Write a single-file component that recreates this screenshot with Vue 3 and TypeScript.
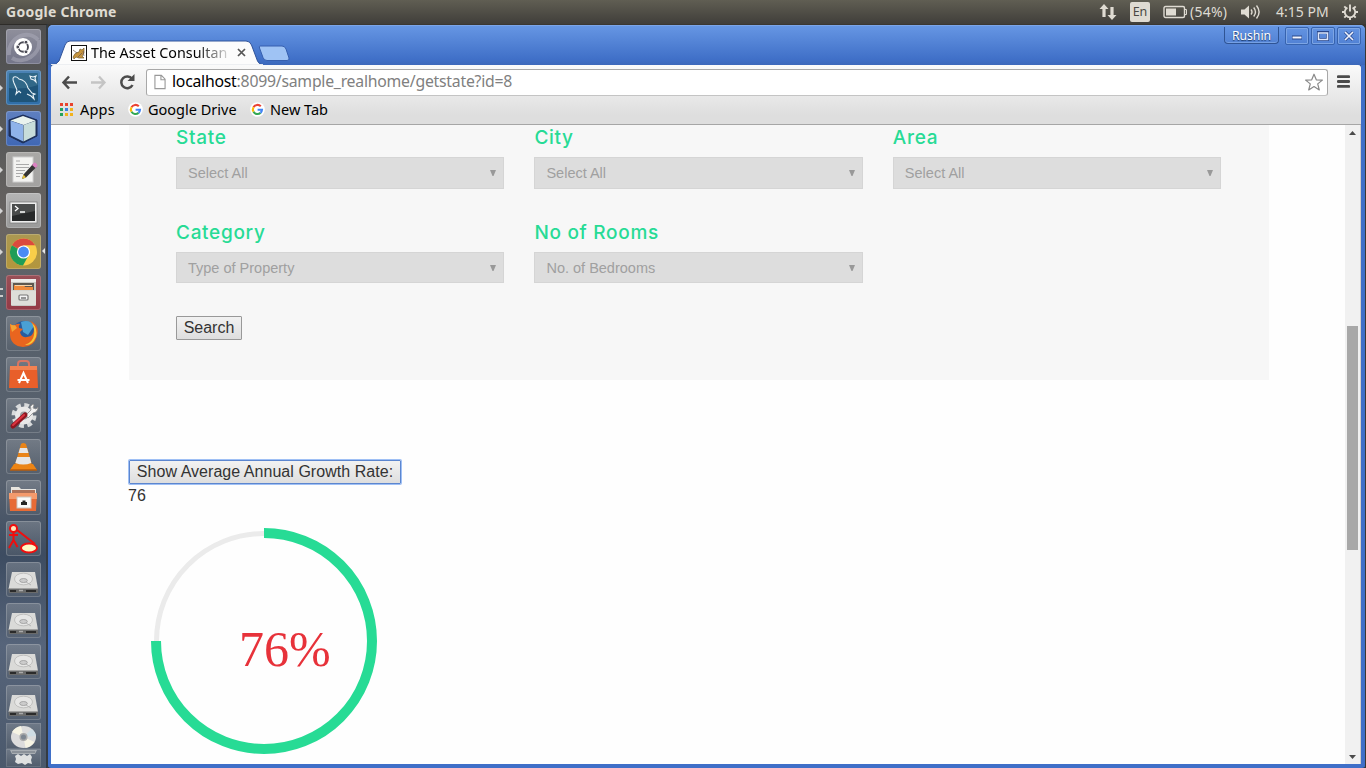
<script setup lang="ts">
interface Launcher { kind: string; bg: string; mark?: string; focused?: boolean }
interface Field { label: string; value: string }

const glass = 'linear-gradient(#8b929b88, #555f6c88)'
const launchers: Launcher[] = [
  { kind: 'dash', bg: 'linear-gradient(#8f8f9b, #73758a)' },
  { kind: 'mysql', bg: 'linear-gradient(#4c83b4, #2f6ea8)', mark: 'arrow' },
  { kind: 'cube', bg: 'linear-gradient(#5f80c0, #3f67b4)', mark: 'arrow' },
  { kind: 'editor', bg: 'linear-gradient(#a9a8a6, #a3a2a1)', mark: 'arrow' },
  { kind: 'terminal', bg: 'linear-gradient(#b5b5b5, #9a9a9a)', mark: 'arrow' },
  { kind: 'chrome', bg: 'linear-gradient(#ab9852, #b3963c)', mark: 'arrow', focused: true },
  { kind: 'files', bg: 'linear-gradient(#995057, #943a46)', mark: 'double' },
  { kind: 'firefox', bg: glass },
  { kind: 'software', bg: glass },
  { kind: 'settings', bg: glass },
  { kind: 'vlc', bg: glass },
  { kind: 'network', bg: glass },
  { kind: 'stick', bg: glass },
  { kind: 'disk', bg: glass },
  { kind: 'disk', bg: glass },
  { kind: 'disk', bg: glass },
  { kind: 'disk', bg: glass },
]
const fields: Field[] = [
  { label: 'State', value: 'Select All' },
  { label: 'City', value: 'Select All' },
  { label: 'Area', value: 'Select All' },
  { label: 'Category', value: 'Type of Property' },
  { label: 'No of Rooms', value: 'No. of Bedrooms' },
]
const appDots = ['#e8432e', '#e8432e', '#e8432e', '#24a25a', '#3b82e0', '#f2b21b', '#24a25a', '#f2b21b', '#f2b21b']
const bookmarks = ['Google Drive', 'New Tab']
</script>

<template>
  <div class="desktop">
    <header class="menubar">
      <span class="app-name">Google Chrome</span>
      <div class="tray">
        <svg class="t-net" width="18" height="18" viewBox="0 0 18 18" fill="#dfdbd2"><path d="M5 1 9.500 6H6.600v8H3.400V6H.5zM13 17l4.500-5h-2.900V4h-3.200v8H8.500z" /></svg>
        <span class="lang">En</span>
        <svg class="t-bat" width="25" height="14" viewBox="0 0 25 14"><rect x="1" y="1.500" width="20.500" height="11" rx="1.500" fill="none" stroke="#dfdbd2" stroke-width="1.400" /><rect x="3" y="3.500" width="10" height="7" fill="#dfdbd2" /><path d="M22 4.500h1.500v5H22" fill="none" stroke="#dfdbd2" /></svg>
        <span class="pct">(54%)</span>
        <svg class="t-vol" width="20" height="16" viewBox="0 0 20 16"><path d="M0 5.500h3.500L8 1.500v13l-4.500-4H0z" fill="#dfdbd2" /><path d="M10 5.500q2 2.500 0 5M12.700 3.500q3.600 4.500 0 9M15.500 1.500q5.200 6.500 0 13" fill="none" stroke="#dfdbd2" stroke-width="1.400" /></svg>
        <span class="clock">4:15 PM</span>
        <svg class="t-gear" width="16" height="16" viewBox="0 0 16 16" fill="none" stroke="#dfdbd2"><path d="M5.400 3.600a5.200 5.200 0 1 0 5.200 0" stroke-width="1.800" /><path d="M8 .5v7M0 8h3M13 8h3M8 13v3M2.300 2.300l2 2M13.700 2.300l-2 2M2.300 13.700l2-2M13.700 13.700l-2-2" stroke-width="1.900" /></svg>
      </div>
    </header>

    <div class="workspace">
      <nav class="launcher">
        <div v-for="(l, i) in launchers" :key="i" class="slot">
          <i class="mark" :class="l.mark" />
          <div class="tile" :style="{ background: l.bg }">
            <svg width="35" height="35" viewBox="0 0 35 35">
              <g v-if="l.kind === 'dash'">
                <path d="M3 26C1 9 22-1 32 11M33 11c2 15-16 25-27 18" fill="none" stroke="#aaaab8" stroke-width="4" opacity=".55" />
                <circle cx="17" cy="18" r="9" fill="#fff" />
                <circle cx="17.200" cy="18" r="4.800" fill="none" stroke="#4b4b55" stroke-width="1.900" />
                <g fill="#4b4b55" stroke="#fff" stroke-width=".9"><circle cx="11.800" cy="18" r="1.900" /><circle cx="20" cy="13.200" r="1.900" /><circle cx="20" cy="22.800" r="1.900" /></g>
              </g>
              <g v-else-if="l.kind === 'mysql'">
                <rect x="3" y="3" width="29" height="29" rx="2" fill="#1f5478" />
                <path d="M3 3h29v12Q18 20 3 18z" fill="#39708f" opacity=".7" />
                <path d="M11 20 8 13Q6 8 8 7q3-1 5 2 7 1 9 9l4 5 3 1-2 1 1 4-3-3-4-2M11 20l-1 4 3-3 2 2M24 6l1 3 3 1 2 2-1-4 1-2-3 1z" fill="none" stroke="#e8f2f7" stroke-width="1.100" />
              </g>
              <g v-else-if="l.kind === 'cube'">
                <path d="M17 4 31 9v16l-14 7L3 25V9z" fill="#1c2f59" stroke="#1c2f59" stroke-linejoin="round" />
                <path d="M17 5 29.500 9.500 17.500 14 4.500 9.500z" fill="#e9f3ee" />
                <path d="M4.500 9.800 17.200 14v16.500L5 24.500z" fill="#8fb3ea" />
                <path d="M17.500 14 29.500 9.800v14.700l-12 6z" fill="#c7ddda" />
              </g>
              <g v-else-if="l.kind === 'editor'">
                <rect x="7" y="5" width="20" height="25" fill="#f3f3f1" stroke="#cfcfcf" />
                <path d="M10 9h4M10 12.500h13M10 15.500h13M10 18.500h9M10 21.500h7M10 24.500h4" stroke="#aaa" stroke-width="1" />
                <path d="m16 27 1.500-4.500L27 12l3.500 3L20 25.500z" fill="#333" />
                <path d="m26 13 2-2.500q3 0 3.500 3.500l-2 2z" fill="#d982c0" /><path d="m16 27 1.500-4.500L20 25.500z" fill="#e5c13c" />
              </g>
              <g v-else-if="l.kind === 'terminal'">
                <rect x="4" y="9" width="27" height="21" fill="#ececec" stroke="#777" stroke-width=".7" />
                <rect x="6" y="11" width="23" height="17" fill="#27292a" /><path d="M6 11h23v7L6 23z" fill="#4a4c4c" />
                <path d="m9 13 3 2.500L9 18M14 19h5" fill="none" stroke="#fff" stroke-width="1.300" />
              </g>
              <g v-else-if="l.kind === 'chrome'">
                <circle cx="17.500" cy="18" r="13.500" fill="#f9ce49" />
                <path d="M17.500 18 5.800 11.200A13.500 13.500 0 0 1 29.200 11.200H17.500z" fill="#db4a3e" />
                <path d="M17.500 18 5.800 11.200A13.500 13.500 0 0 0 17 31.500l5.500-10z" fill="#1f9d57" />
                <circle cx="17.500" cy="18" r="6.600" fill="#fff" /><circle cx="17.500" cy="18" r="5.400" fill="#4a8af4" />
              </g>
              <g v-else-if="l.kind === 'files'">
                <rect x="5" y="4" width="25" height="27" rx="1" fill="#c8c8c3" />
                <path d="M5 4h25v3H5z" fill="#ededea" /><path d="M7 8h21v7H7z" fill="#5e5850" /><path d="M8 10h10l1 2h8v3H8z" fill="#ef8b3d" /><path d="M9 10.500h17" stroke="#f9d3a8" />
                <path d="M5 15.500h25V30H5z" fill="#deded9" /><rect x="13" y="20" width="9" height="5" rx="1" fill="#f4f4f4" stroke="#777" stroke-width="1.200" /><path d="M15 23h5" stroke="#777" stroke-width="1.500" />
              </g>
              <g v-else-if="l.kind === 'firefox'">
                <circle cx="18" cy="17.500" r="12.500" fill="#285c9d" /><path d="M15 6q9-3 13 4l-6 9-5-3z" fill="#4aa0d4" />
                <path d="M4 8q3 2 5 1 3-2 5-1-2 2-1 4l4 1-3 3q1 6 7 5 7-1 7-8 0-5-4-8 10 4 7 15-3 11-14 11Q5 30 4 19z" fill="#e9651f" />
                <path d="M26 7q6 5 4 14-4 9-11 8 8-3 9-10 1-6-2-12z" fill="#f7c739" /><path d="M4 8q3 2 5 1l2 3-5 4z" fill="#f4a434" />
              </g>
              <g v-else-if="l.kind === 'software'">
                <path d="M12 11V7q0-3 3-3h5q3 0 3 3v4" fill="none" stroke="#d97562" stroke-width="2" />
                <path d="M4 9h27l1 22H3z" fill="#e85f2a" /><path d="M4 9h27v4H4z" fill="#f28252" />
                <path d="m13 26 4.500-10L22 26M11.500 23h12" fill="none" stroke="#fff" stroke-width="2" />
              </g>
              <g v-else-if="l.kind === 'settings'">
                <circle cx="18" cy="17.500" r="10" fill="none" stroke="#d8dadb" stroke-width="5" stroke-dasharray="4.500 3.350" /><circle cx="18" cy="17.500" r="9" fill="#e8e8e8" /><circle cx="18" cy="17.500" r="4" fill="#9da0a3" />
                <path d="m20 17 5-5q-2-4 2-6l1 1-1 3 3 1 2-2q0 5-5 6l-5 5z" fill="#f2f2f2" stroke="#888" stroke-width=".8" /><path d="M7 28 19 17" stroke="#8e1620" stroke-width="5" stroke-linecap="round" /><path d="M7 27 18 17" stroke="#dc3440" stroke-width="2" stroke-linecap="round" />
              </g>
              <g v-else-if="l.kind === 'vlc'">
                <path d="M8 25h19l4 6H4z" fill="#ee8514" /><path d="M15 5q2-2 5 0l6 21q-8 5-17 0z" fill="#e98418" /><path d="M14 9h7l1.500 5h-10zM11.300 18h12.500l1.500 6q-8 3-16 0z" fill="#e6e6e6" /><path d="M4 31h27" stroke="#b85d0b" stroke-width="1.500" />
              </g>
              <g v-else-if="l.kind === 'network'">
                <path d="M5 7h8l2 2h15v5H5z" fill="#e8e5df" /><path d="M6 10h23v3H6z" fill="#ad7159" /><path d="M3 13h28l-1 18H4z" fill="#e76b36" /><path d="M3 13h28v6H3z" fill="#f49a6c" />
                <rect x="11" y="17" width="14" height="11" fill="#fafafa" stroke="#c9c5be" /><path d="M15 25v-3h1.500v-1.500h3V22H21v3z" fill="#252525" />
              </g>
              <g v-else-if="l.kind === 'stick'" fill="none" stroke="#f00d0d" stroke-width="2">
                <circle cx="7.500" cy="7.500" r="3.500" fill="#ffe6bb" /><path d="M7.500 11v9M3 14h9M7.500 19 3 27M7.500 19l4 7M11 9l18 14" /><ellipse cx="23" cy="27" rx="8" ry="4.500" fill="#fffac4" />
              </g>
              <g v-else>
                <path d="M6 10h23l3 17H2.500z" fill="#dadad8" /><path d="M2.500 26.500H32V31H3z" fill="#6a6b6b" /><path d="M4 29h6M20 29h10" stroke="#2b2b2b" stroke-width="1.800" /><path d="M13 28.500h4" stroke="#aaa" stroke-width="1.500" />
                <ellipse cx="17.500" cy="17" rx="9" ry="5.800" fill="#e6e6e5" stroke="#b8b8b6" stroke-width=".8" /><ellipse cx="17.500" cy="18.500" rx="3.800" ry="2" fill="#ccc" stroke="#999" stroke-width=".8" /><path d="m20 20 5 3" stroke="#b5b5b5" />
              </g>
            </svg>
          </div>
          <i v-if="l.focused" class="focus-mark" />
        </div>
        <div class="folded cd">
          <svg width="35" height="26" viewBox="0 0 35 26"><ellipse cx="17.500" cy="14" rx="12.500" ry="11" fill="#dcdcdc" /><path d="M17.500 14 6 9q3-5 9-6zM17.500 14l11 5q-3 5-9 6z" fill="#f6f4e4" /><path d="m17.500 14 8-8q4 3 4.500 7z" fill="#cfdde4" /><circle cx="17.500" cy="14" r="3.300" fill="#7e8791" stroke="#aaa" stroke-width="1.500" /></svg>
        </div>
        <div class="folded trash">
          <svg width="35" height="18" viewBox="0 0 35 18"><path d="M4 1h27l-2 4H6z" fill="#a9aeb3" /><path d="M6 3h23" stroke="#6c757e" /><path d="m9 7 3-2 3 2 3-2 3 2 3-2 2 3-1 3 1 4-4-1-3 2-3-2-4 1-3-2 1-3z" fill="#dfe1e1" /></svg>
        </div>
      </nav>

      <main class="window">
        <div class="titlebar">
          <div class="tab">
            <svg class="tab-shape" width="214" height="25" viewBox="0 0 214 25"><path d="M0 25q6-.5 8-4l6-16q1.500-4 5-4h176q4 0 5.500 4l6 16q1.500 3.500 5.500 4z" fill="#fcfcfc" stroke="#31549a" stroke-width="1" /><path d="M0 24.600h212" stroke="#f7f7f7" /></svg>
            <div class="tab-content">
              <svg class="cat" width="16" height="16" viewBox="0 0 16 16"><rect x=".5" y=".5" width="15" height="15" fill="#fff" stroke="#111" /><path d="M2 12q2-5 6-5l1-3 2 1 2-2v5l-2 3 2 2H8l-3-1-2 2z" fill="#c7953f" stroke="#756030" stroke-width=".7" /><path d="m2 5 4 3M7 12l4-4M12 6l1 5" stroke="#655" stroke-width=".7" /></svg>
              <span class="tab-title">The Asset Consultan</span>
              <svg class="tab-x" width="9" height="9" viewBox="0 0 9 9"><path d="m1 1 7 7M8 1 1 8" stroke="#555" stroke-width="1.700" /></svg>
            </div>
          </div>
          <svg class="new-tab" width="33" height="17" viewBox="0 0 33 17"><path d="M2 1h22q3 0 4 3l3 9q.5 2.500-2 2.500H9q-3 0-4-3L1.500 3Q1 1 2 1z" fill="#9fc3f4" stroke="#365fae" /></svg>
          <div class="controls">
            <span class="user">Rushin</span>
            <span class="wbtn"><svg width="12" height="10" viewBox="0 0 12 10"><path d="M1 6.500h10" stroke="#29468a" stroke-width="4" /><path d="M1.500 6.500h9" stroke="#f3f6ff" stroke-width="2" /></svg></span>
            <span class="wbtn"><svg width="12" height="10" viewBox="0 0 12 10"><rect x="1.500" y="1.500" width="9" height="7" fill="none" stroke="#29468a" stroke-width="3" /><path d="M1.500 2h9v6.500h-9z" fill="none" stroke="#dce7fb" stroke-width="1.600" /></svg></span>
            <span class="wbtn"><svg width="12" height="10" viewBox="0 0 12 10"><path d="m2 1 8 8M10 1 2 9" stroke="#29468a" stroke-width="3" /><path d="m2 1 8 8M10 1 2 9" stroke="#eef3ff" stroke-width="1.700" /></svg></span>
          </div>
        </div>

        <div class="chrome">
          <div class="toolbar">
            <svg width="17" height="15" viewBox="0 0 17 15" class="nav-ico"><path d="M8 1.500 2.500 7.500l5.500 6M2.500 7.500H16" fill="none" stroke="#4c4c4c" stroke-width="2.500" /></svg>
            <svg width="17" height="15" viewBox="0 0 17 15" class="nav-ico fwd"><path d="m9 1.500 5.500 6-5.500 6M14.500 7.500H1" fill="none" stroke="#c4c4c4" stroke-width="2.300" /></svg>
            <svg width="17" height="16" viewBox="0 0 17 16" class="nav-ico rel"><path d="M13 4.800A5.900 5.900 0 1 0 13.500 11" fill="none" stroke="#4c4c4c" stroke-width="2.500" /><path d="M15.500 0v7h-7z" fill="#4c4c4c" /></svg>
            <div class="omnibox">
              <svg width="12" height="16" viewBox="0 0 13 16"><path d="M1 .8h7L12 5v10.200H1zM7.500 1v4.500H12" fill="#fff" stroke="#999" stroke-width="1.200" /></svg>
              <span class="url"><b>localhost</b>:8099/sample_realhome/getstate?id=8</span>
              <svg class="star" width="20" height="18" viewBox="0 0 20 18"><path d="m10 1.200 2.300 5.600 6.100.3-4.700 3.800 1.600 6L10 13.500l-5.300 3.400 1.600-6L1.600 7.100l6.100-.3z" fill="#fff" stroke="#888" stroke-width="1.200" stroke-linejoin="round" /></svg>
            </div>
            <svg class="menu" width="13" height="13" viewBox="0 0 13 13"><path d="M1.200 1.700h10.600M1.200 6.500h10.600M1.200 11.300h10.600" stroke="#4b4b4b" stroke-width="2.800" stroke-linecap="round" /></svg>
          </div>
          <div class="bookmarks">
            <div class="dots"><i v-for="(c, i) in appDots" :key="i" :style="{ background: c }" /></div>
            <span class="apps">Apps</span>
            <div v-for="b in bookmarks" :key="b" class="bookmark">
              <svg width="15" height="15" viewBox="0 0 15 15"><circle cx="7.500" cy="7.500" r="7.300" fill="#fff" /><g fill="none" stroke-width="2.100"><path d="M10.800 4.300A4.600 4.600 0 0 0 3.500 5.300" stroke="#ea4335" /><path d="M3.500 5.300a4.600 4.600 0 0 0 0 4.500" stroke="#fbbc05" /><path d="M3.500 9.800a4.600 4.600 0 0 0 7 1.100" stroke="#34a853" /><path d="M10.500 10.900a4.600 4.600 0 0 0 1.500-3.100H7.600" stroke="#4285f4" /></g></svg>
              <span>{{ b }}</span>
            </div>
          </div>
        </div>

        <div class="viewport">
          <section class="page">
            <form class="panel" @submit.prevent>
              <div class="fields">
                <div v-for="f in fields" :key="f.label" class="field">
                  <h3>{{ f.label }}</h3>
                  <div class="select"><span>{{ f.value }}</span><svg width="6" height="6" viewBox="0 0 6 6"><path d="M0 0h6L3.500 6h-1z" fill="#999" /></svg></div>
                </div>
              </div>
              <button class="btn search">Search</button>
            </form>
            <button class="btn growth">Show Average Annual Growth Rate:</button>
            <div class="value">76</div>
            <svg class="ring" width="270" height="252" viewBox="0 0 270 252">
              <circle cx="135" cy="134" r="107.500" fill="none" stroke="#ebebeb" stroke-width="5" />
              <path d="M135 26a108 108 0 1 1-108 108" fill="none" stroke="#27db95" stroke-width="10" />
              <text x="110" y="159" font-size="50" fill="#e7323a">76%</text>
            </svg>
          </section>
          <div class="scrollbar">
            <svg width="7" height="4" viewBox="0 0 7 4"><path d="M3.500 0 7 4H0z" fill="#4b4b4b" /></svg>
            <i class="thumb" />
            <svg width="7" height="4" viewBox="0 0 7 4"><path d="M0 0h7L3.500 4z" fill="#4b4b4b" /></svg>
          </div>
        </div>
      </main>
    </div>
  </div>
</template>

<style>
html, body { margin: 0; overflow: hidden; }
</style>
<style scoped>
* { box-sizing: border-box; }
svg { display: block; flex: none; }
.desktop { width: 1366px; height: 768px; display: flex; flex-direction: column; overflow: hidden; font-family: "Noto Sans", "Open Sans", sans-serif; background: #3a3732; }
.menubar { height: 24px; flex: none; display: flex; justify-content: space-between; align-items: center; padding-left: 6px; background: linear-gradient(#605e53, #403e3a); color: #dfdbd2; }
.app-name { font-size: 14px; font-weight: 700; line-height: 24px; letter-spacing: .25px; white-space: nowrap; }
.tray { display: flex; align-items: center; height: 24px; padding-right: 8px; font-size: 14px; white-space: nowrap; }
.lang { width: 20px; height: 20px; margin: 0 13px 0 13px; border-radius: 2px; background: #dfdbd2; color: #4a4843; font-size: 12.5px; line-height: 20px; text-align: center; }
.pct { width: 39px; margin-left: 2px; letter-spacing: .25px; line-height: 22px; padding-bottom: 1px; }
.t-vol { margin-left: 12px; }
.clock { width: 54px; margin-left: 15px; letter-spacing: 0; line-height: 22px; padding-bottom: 1px; }
.t-gear { margin-left: 12px; }

.workspace { flex: 1; min-height: 0; display: flex; }
.launcher { width: 48px; flex: none; padding-top: 4px; display: flex; flex-direction: column; overflow: hidden; background: linear-gradient(#4f4f50 0, #5a5b5b 120px, #6a6562 205px, #58616b 270px, #56606e 460px, #3d4c61 530px, #56647a 620px, #4b596c 744px); border-right: 2px solid #343b42; border-top: 1px solid #2e2c29; }
.slot { height: 41px; flex: none; display: flex; align-items: flex-start; }
.mark { width: 6px; height: 35px; display: flex; align-items: center; }
.mark.arrow::before { content: ''; border-left: 3px solid #d5d5d5; border-top: 3px solid transparent; border-bottom: 3px solid transparent; }
.mark.double::before { content: ''; width: 3px; height: 5px; border-top: 2px solid #ccc; border-bottom: 2px solid #ccc; }
.tile { width: 35px; height: 35px; border-radius: 3px; box-shadow: inset 0 0 0 1px #ffffff30; }
.focus-mark { margin: 14px 0 0 1px; border-right: 3px solid #e5e5e5; border-top: 3px solid transparent; border-bottom: 3px solid transparent; }
.folded { width: 35px; margin-left: 6px; flex: none; background: linear-gradient(#8b929b88, #555f6c88); box-shadow: inset 0 0 0 1px #ffffff20; }
.cd { height: 26px; margin-top: -3px; }
.trash { height: 18px; }

.window { flex: 1; min-width: 0; margin: 1px 1px 0 0; border: 3px solid #3f6fc8; border-top: 0; border-right-width: 4px; border-bottom-width: 4px; border-radius: 5px 5px 3px 3px; background: #4170c7; box-shadow: inset 0 0 0 1px #254988; display: flex; flex-direction: column; }
.titlebar { height: 40px; flex: none; display: flex; margin: 0 -4px 0 -3px; padding-left: 3px; border-radius: 5px 5px 0 0; background: linear-gradient(#6797e4, #4070c8 85%, #3c68ba); box-shadow: inset 0 1px #7ba5e8; }
.tab { width: 207px; height: 25px; margin-top: 15px; position: relative; }
.tab-shape { position: absolute; left: 0; top: 0; }
.tab-content { position: relative; display: flex; align-items: center; height: 25px; padding-left: 20px; }
.tab-title { width: 140px; margin-left: 4px; font-size: 14.3px; line-height: 24px; letter-spacing: 0; white-space: nowrap; color: transparent; background: linear-gradient(90deg, #000 105px, #0001 140px); background-clip: text; -webkit-background-clip: text; }
.tab-x { margin-left: 6px; }
.new-tab { margin-top: 20px; position: relative; }
.controls { margin-left: auto; display: flex; padding-right: 4px; }
.user { width: 55px; height: 17px; margin: 2px 4px 0 0; border: 1px solid #2f5494; border-top: 0; border-radius: 0 0 4px 4px; color: #fff; font-size: 12.2px; line-height: 18px; text-align: center; text-shadow: 0 1px 1px #17345f; box-shadow: inset 0 -1px #75a0e4; }
.wbtn { width: 24px; height: 18px; margin: 2px 0 0 2px; display: flex; align-items: center; justify-content: center; border: 1px solid #3763ae; border-radius: 2px; box-shadow: inset 0 0 0 1px #7da5e4; }

.chrome { height: 60px; flex: none; background: linear-gradient(#fafafa, #dedede 85%); border-bottom: 1px solid #a6a6a6; border-radius: 3px 3px 0 0; }
.toolbar { height: 33px; display: flex; align-items: center; padding-left: 10px; }
.nav-ico { margin-top: 1px; }
.fwd { margin-left: 12px; }
.rel { margin-left: 12px; }
.omnibox { width: 1182px; height: 27px; margin: 1px 0 0 10px; padding: 0 3px 0 7px; display: flex; align-items: center; border: 1px solid #a8a8a8; border-bottom-color: #c4c4c4; border-radius: 3px; background: #fff; }
.url { margin-left: 6px; font-size: 15.8px; line-height: 22px; padding-bottom: 2px; letter-spacing: -.24px; color: #808080; white-space: nowrap; }
.url b { font-weight: 400; color: #000; }
.star { margin-left: auto; }
.menu { margin-left: 9px; }
.bookmarks { display: flex; align-items: center; height: 22px; padding-left: 9px; font-size: 14.5px; color: #000; white-space: nowrap; }
.dots { display: grid; grid-template-columns: repeat(3, 3px); gap: 2px; }
.dots i { width: 3px; height: 3px; }
.apps { width: 48px; margin-left: 7px; letter-spacing: .2px; }
.bookmark { display: flex; align-items: center; gap: 5px; width: 122px; }

.viewport { flex: 1; min-height: 0; display: flex; background: #fefefe; overflow: hidden; }
.page { flex: 1; padding-left: 78px; font-family: "Liberation Sans", Arial, sans-serif; }
.panel { width: 1140px; height: 255px; padding: 0 48px 0 47px; background: #f7f7f7; }
.fields { display: grid; grid-template-columns: repeat(3, 1fr); column-gap: 30.3px; grid-template-rows: 95px 95px; }
h3 { margin: 0; height: 32px; font-family: Inter, "Noto Sans", sans-serif; font-size: 19px; font-weight: 550; line-height: 25px; color: #27db95; white-space: nowrap; letter-spacing: .7px; }
.select { height: 32px; padding: 0 7px 0 11px; display: flex; align-items: center; justify-content: space-between; border: 1px solid #d5d5d5; background: #ddd; color: #a0a0a0; font-size: 14.5px; }
.field:nth-child(n + 4) .select { height: 31px; }
.btn { display: block; margin: 0; padding: 0; font: 16px "Liberation Sans", Arial, sans-serif; color: #333; background: linear-gradient(#f2f2f2, #dedede); border: 1px solid #999; border-radius: 1px; white-space: nowrap; }
.search { width: 66px; height: 24px; margin-top: 1px; }
.growth { width: 272px; height: 24px; margin-top: 80px; border-color: #5c86cf; box-shadow: 0 0 0 1px #9fc0f5; letter-spacing: .04px; }
.value { font-size: 16px; line-height: 23px; margin-left: -1px; padding-top: 0; color: #333; }
.ring { font-family: "Liberation Serif", "Times New Roman", serif; }
.scrollbar { width: 16px; flex: none; display: flex; flex-direction: column; align-items: center; padding: 6px 0 5px 0; background: #f1f1f1; border-right: 1px solid #d2cec8; }
.thumb { width: 11px; height: 224px; margin: 191px 0 auto; background: #a8a8a8; }
</style>
